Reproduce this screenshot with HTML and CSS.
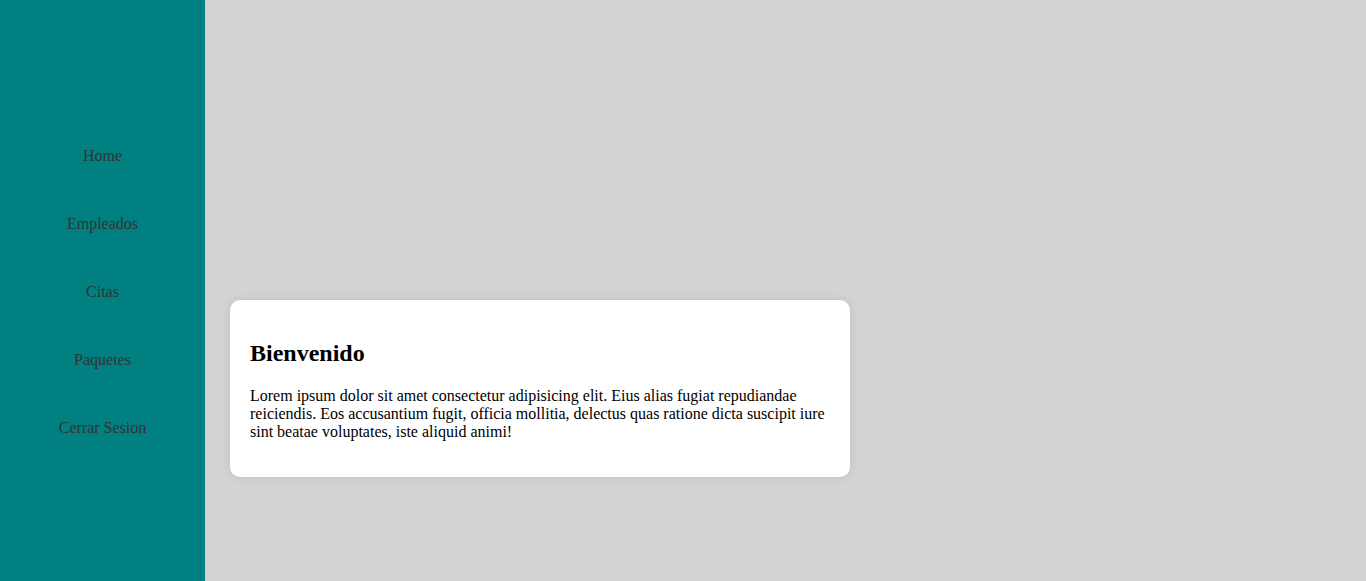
FILE: index.html
```html
<!DOCTYPE html>
<html lang="es">
<head>
<meta charset="utf-8">
<title>Inicio</title>
<link rel="stylesheet" href="styles.css">
</head>
<body>
<div class="layout">
  <aside class="sidebar">
    <nav class="nav">
      <a class="nav-link" href="#">Home</a>
      <a class="nav-link" href="#">Empleados</a>
      <a class="nav-link" href="#">Citas</a>
      <a class="nav-link" href="#">Paquetes</a>
      <a class="nav-link" href="#">Cerrar Sesion</a>
    </nav>
  </aside>
  <main class="main">
    <section class="card">
      <h2 class="card-title">Bienvenido</h2>
      <p class="card-text">Lorem ipsum dolor sit amet consectetur adipisicing elit. Eius alias fugiat repudiandae reiciendis. Eos accusantium fugit, officia mollitia, delectus quas ratione dicta suscipit iure sint beatae voluptates, iste aliquid animi!</p>
    </section>
  </main>
</div>
</body>
</html>
```

FILE: styles.css
```css
html, body {
  margin: 0;
  padding: 0;
  height: 100%;
}
body {
  font-family: "Liberation Serif", "Times New Roman", serif;
  font-size: 16px;
  background: #d3d3d3;
  color: #000;
}
.layout {
  display: flex;
  height: 100%;
}
.sidebar {
  width: 205px;
  flex: none;
  background: #008080;
  display: flex;
  flex-direction: column;
  justify-content: center;
  padding-top: 2px;
  box-sizing: border-box;
}
.nav {
  display: flex;
  flex-direction: column;
  align-items: center;
  gap: 50px;
}
.nav-link {
  color: #333;
  text-decoration: none;
  line-height: 18px;
}
.main {
  flex: 1;
  padding: 300px 0 0 25px;
}
.card {
  width: 580px;
  background: #fff;
  border-radius: 10px;
  padding: 20px;
  box-shadow: 0 0 10px rgba(0, 0, 0, 0.1);
}
.card-title {
  font-size: 24px;
  margin: 19.92px 0;
}
.card-text {
  margin: 16px 0;
}
```
